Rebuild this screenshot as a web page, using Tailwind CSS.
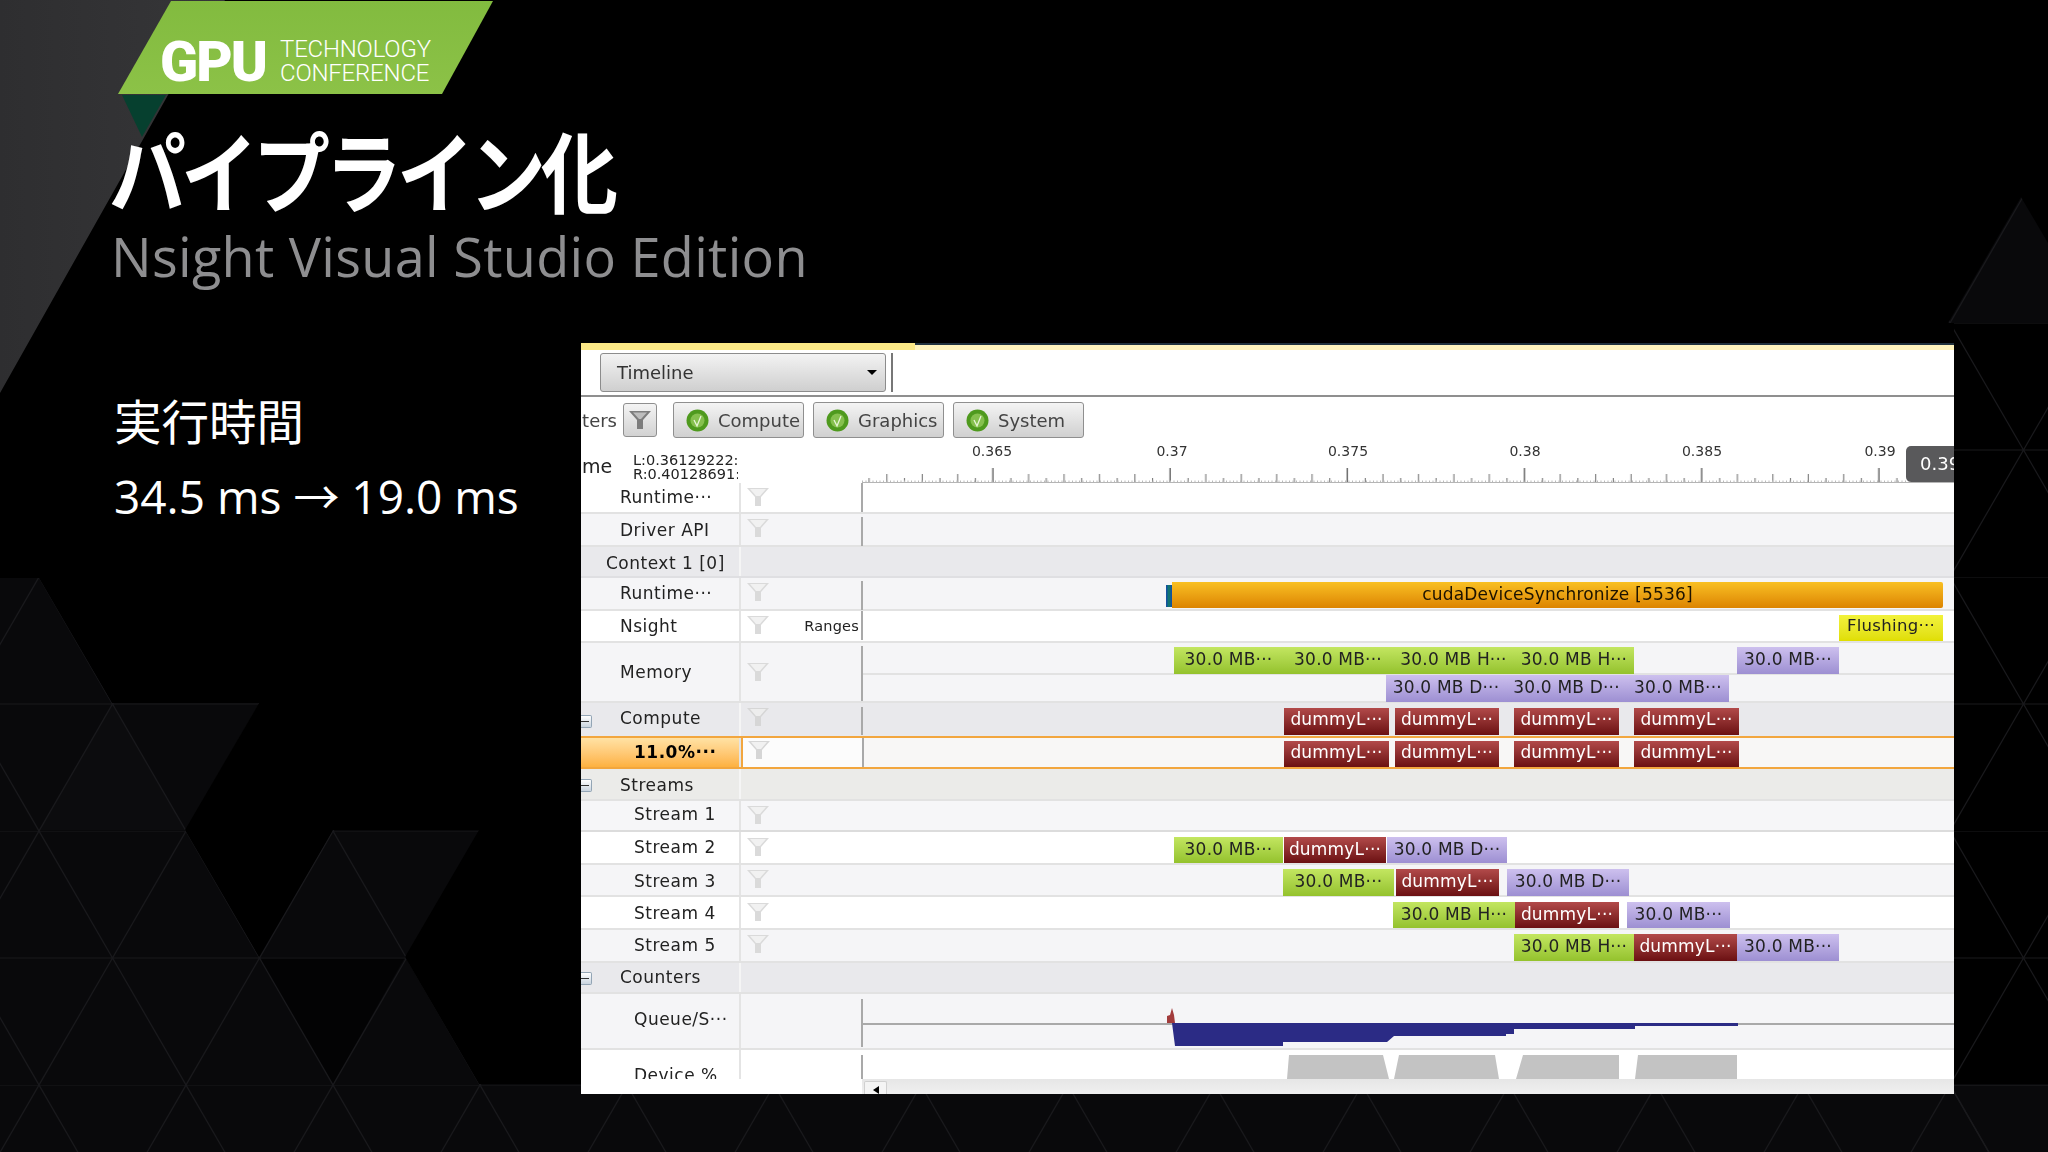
<!DOCTYPE html>
<html lang="ja">
<head>
    <meta charset="UTF-8">
    <title>パイプライン化</title>
    <script src="https://cdn.jsdelivr.net/npm/@tailwindcss/browser@4"></script>
</head>
<body class="bg-black">
<div class="relative w-[2048px] h-[1152px] overflow-hidden bg-black font-['Open_Sans',sans-serif]">

    <!-- slide background -->
    <svg class="absolute inset-0" width="2048" height="1152" viewBox="0 0 2048 1152">
        <defs>
            <pattern id="tri" x="39" y="577" width="147" height="254" patternUnits="userSpaceOnUse">
                <path d="M0 0H147M0 127H147M0 0L73.5 127L147 254M147 0L73.5 127L0 254" fill="none" stroke="#19191c" stroke-width="1.2"/>
            </pattern>
            <linearGradient id="corner" x1="0" y1="0" x2="1" y2="0">
                <stop offset="0" stop-color="#2e2e30"/>
                <stop offset="1" stop-color="#363638"/>
            </linearGradient>
        </defs>
        <polygon points="0,0 225,0 168,95 0,393" fill="url(#corner)"/>
        <polygon points="0,578 39,578 112,703 259,703 185,830 259,957 333,830 479,830 405,957 479,1084 2048,1084 2048,1152 0,1152" fill="#09090b"/>
        <polygon points="259,957 405,957 333,1084" fill="#030304"/>
        <polygon points="39,830 185,830 112,703" fill="#0c0c0e"/>
        <polygon points="0,578 39,578 112,703 259,703 185,830 259,957 333,830 479,830 405,957 479,1084 2048,1084 2048,1152 0,1152" fill="url(#tri)"/>
        <polygon points="1954,323 2048,323 2048,1152 1954,1152" fill="url(#tri)"/>
        <polygon points="2021,197 2048,243 2048,323 1948,323" fill="#09090b"/>
        <polygon points="2021,197 2048,243 2048,323 1948,323" fill="url(#tri)"/>
        <polygon points="122,95 166,95 142,137" fill="#06402f"/>
    </svg>

    <div class="relative">
        <!-- header -->
        <div class="h-[343px] pl-[111px] pt-px">
            <div class="relative w-[376px] h-[93px] ml-[7px] bg-gradient-to-b from-[#82bb3f] to-[#8cc247] [clip-path:polygon(53px_0,375px_0,324px_93px,0_93px)]">
                <span class="absolute left-[42px] top-[33px] text-[56px] leading-[56px] font-black tracking-[-2px] text-white font-['Roboto',sans-serif]">GPU</span>
                <span class="absolute left-[162px] top-[36px] text-[24px] leading-[24px] font-light tracking-[-0.2px] text-white font-['Roboto',sans-serif]">TECHNOLOGY</span>
                <span class="absolute left-[162px] top-[60px] text-[24px] leading-[24px] font-light tracking-[-0.2px] text-white font-['Roboto',sans-serif]">CONFERENCE</span>
            </div>
            <h1 class="mt-[24px] h-[100px] -ml-[2px] scale-y-[1.14] text-[77px] tracking-[-5px] leading-[100px] font-bold text-white font-['Noto_Sans_CJK_JP',sans-serif]">パイプライン化</h1>
            <p class="mt-[5px] text-[54px] tracking-[0.3px] leading-[66px] text-[#8e8e90]">Nsight Visual Studio Edition</p>
        </div>

        <div class="flex">
            <!-- left text -->
            <div class="w-[581px] shrink-0 pl-[114px] pt-[44px] text-white">
                <p class="text-[47.5px] leading-[66px] font-['Noto_Sans_CJK_JP',sans-serif]">実行時間</p>
                <p class="mt-[13px] text-[46px] leading-[60px] font-['Open_Sans','Noto_Sans_CJK_JP',sans-serif] whitespace-nowrap">34.5 ms → 19.0 ms</p>
            </div>

            <!-- profiler panel -->
            <div class="relative w-[1373px] h-[751px] shrink-0 bg-white overflow-hidden font-['DejaVu_Sans',sans-serif] text-[17px] tracking-[0.5px] text-[#222] blur-[0.4px]">
                <div class="flex h-[7px]">
                    <div class="w-[334px] bg-[#fbe886]"></div>
                    <div class="flex-1 flex flex-col">
                        <div class="h-[2px] bg-[#21323f]"></div>
                        <div class="flex-1 bg-[#fff3bd]"></div>
                    </div>
                </div>

                <!-- toolbar -->
                <div class="flex items-center h-[47px] pl-[19px] border-b-2 border-[#8f8f8f]">
                    <div class="w-[286px] h-[39px] rounded-[3px] border border-[#8c8c8c] bg-gradient-to-b from-[#f3f3f3] to-[#cfcfcf] flex items-center justify-between pl-[16px] pr-[8px] text-[#333] text-[18px] tracking-normal">
                        <span>Timeline</span>
                        <span class="w-0 h-0 border-x-[5px] border-x-transparent border-t-[5px] border-t-black"></span>
                    </div>
                    <div class="ml-[5px] w-[2px] h-[39px] bg-[#777]"></div>
                </div>

                <!-- filter buttons -->
                <div class="flex items-center h-[46px] text-[#444] text-[18px] tracking-normal">
                    <div class="w-[42px] pr-[6px] flex justify-end overflow-hidden whitespace-nowrap">ters</div>
                    <div class="w-[34px] h-[34px] rounded-[3px] border border-[#8f8f8f] bg-gradient-to-b from-[#f4f4f4] to-[#d2d2d2] flex items-center justify-center">
                        <svg width="22" height="18" viewBox="0 0 22 18"><path d="M0 0H22L14 9V18H8V9Z" fill="#7d7d7d"/><path d="M4 1.5H18L12 8H10Z" fill="#bdbdbd"/></svg>
                    </div>
                    <div class="ml-[16px] w-[131px] h-[36px] rounded-[3px] border border-[#8f8f8f] bg-gradient-to-b from-[#f4f4f4] to-[#d0d0d0] flex items-center pl-[12px] gap-[9px]">
                        <svg width="23" height="23" viewBox="0 0 23 23"><circle cx="11.5" cy="11.5" r="11" fill="#4f9a1e"/><circle cx="11.5" cy="11.5" r="7" fill="#86c04e"/><path d="M8 11L11 17L15 7" fill="none" stroke="#e8f5d8" stroke-width="1.3"/></svg>
                        <span>Compute</span>
                    </div>
                    <div class="ml-[9px] w-[131px] h-[36px] rounded-[3px] border border-[#8f8f8f] bg-gradient-to-b from-[#f4f4f4] to-[#d0d0d0] flex items-center pl-[12px] gap-[9px]">
                        <svg width="23" height="23" viewBox="0 0 23 23"><circle cx="11.5" cy="11.5" r="11" fill="#4f9a1e"/><circle cx="11.5" cy="11.5" r="7" fill="#86c04e"/><path d="M8 11L11 17L15 7" fill="none" stroke="#e8f5d8" stroke-width="1.3"/></svg>
                        <span>Graphics</span>
                    </div>
                    <div class="ml-[9px] w-[131px] h-[36px] rounded-[3px] border border-[#8f8f8f] bg-gradient-to-b from-[#f4f4f4] to-[#d0d0d0] flex items-center pl-[12px] gap-[9px]">
                        <svg width="23" height="23" viewBox="0 0 23 23"><circle cx="11.5" cy="11.5" r="11" fill="#4f9a1e"/><circle cx="11.5" cy="11.5" r="7" fill="#86c04e"/><path d="M8 11L11 17L15 7" fill="none" stroke="#e8f5d8" stroke-width="1.3"/></svg>
                        <span>System</span>
                    </div>
                </div>

                <!-- ruler -->
                <div class="relative h-[40px] tracking-normal">
                    <span class="absolute left-[1px] top-[13px] text-[19px] leading-[20px]">me</span>
                    <div class="absolute left-[52px] top-[10px] w-[105px] overflow-hidden text-[14.5px] leading-[14px] whitespace-nowrap">L:0.36129222:<br>R:0.40128691:</div>
                    <span class="absolute left-[411px] top-0 -translate-x-1/2 text-[14px] leading-[16px] text-[#333]">0.365</span>
                    <span class="absolute left-[591px] top-0 -translate-x-1/2 text-[14px] leading-[16px] text-[#333]">0.37</span>
                    <span class="absolute left-[767px] top-0 -translate-x-1/2 text-[14px] leading-[16px] text-[#333]">0.375</span>
                    <span class="absolute left-[944px] top-0 -translate-x-1/2 text-[14px] leading-[16px] text-[#333]">0.38</span>
                    <span class="absolute left-[1121px] top-0 -translate-x-1/2 text-[14px] leading-[16px] text-[#333]">0.385</span>
                    <span class="absolute left-[1299px] top-0 -translate-x-1/2 text-[14px] leading-[16px] text-[#333]">0.39</span>
                    <svg class="absolute left-[281px] top-0" width="1092" height="40" viewBox="0 0 1092 40">
                        <defs>
                            <pattern id="ticks" x="-46.5" y="0" width="177.2" height="40" patternUnits="userSpaceOnUse">
                                <path d="M177.2 25V40M0.5 25V40M35.9 31V40M71.4 31V40M106.8 31V40M142.2 31V40M18.2 35V40M53.6 35V40M89 35V40M124.5 35V40M159.9 35V40" stroke="#6b6b6b" stroke-width="1"/>
                            </pattern>
                        </defs>
                        <rect width="1092" height="40" fill="url(#ticks)"/>
                        <path d="M0 38.5H1092" stroke="#bbb" stroke-width="2" stroke-dasharray="1 2.5"/>
                        <path d="M0 39.5H1092" stroke="#b5b5b5"/>
                    </svg>
                    <div class="absolute left-[1325px] top-[3px] w-[60px] h-[36px] rounded-l-[5px] bg-[#59595b] text-white text-[18px] leading-[35px] pl-[14px]">0.39</div>
                </div>

                <!-- track rows -->
                <div class="flex flex-col">
                    <div class="flex h-[31px] bg-white border-b-2 border-[#e2e2e2]">
                        <div class="w-[158px] pl-[39px] leading-[29px] whitespace-nowrap">Runtime···</div>
                        <div class="w-[2px] bg-[#e4e4e4]"></div>
                        <div class="w-[120px] pl-[6px] pt-[5px]"><svg width="22" height="18" viewBox="0 0 22 18"><path d="M0 0H22L14 9V18H8V9Z" fill="#dadada"/><path d="M3 1H19L13 8H9Z" fill="#f1f1f1"/></svg></div>
                        <div class="w-[2px] h-[29px] bg-[#a9a9a9]"></div>
                        <div class="relative flex-1"></div>
                    </div>
                    <div class="flex h-[33px] bg-[#f5f5f7] border-b-2 border-[#e2e2e2]">
                        <div class="w-[158px] pl-[39px] leading-[32px] whitespace-nowrap">Driver API</div>
                        <div class="w-[2px] bg-[#e4e4e4]"></div>
                        <div class="w-[120px] pl-[6px] pt-[5px]"><svg width="22" height="18" viewBox="0 0 22 18"><path d="M0 0H22L14 9V18H8V9Z" fill="#dadada"/><path d="M3 1H19L13 8H9Z" fill="#f1f1f1"/></svg></div>
                        <div class="w-[2px] h-[29px] mt-[3px] bg-[#a9a9a9]"></div>
                        <div class="relative flex-1"></div>
                    </div>
                    <div class="flex h-[31px] bg-[#e9e9ec] border-b-2 border-[#dfdfe2]">
                        <div class="w-[158px] pl-[25px] leading-[32px] whitespace-nowrap">Context 1 [0]</div>
                        <div class="w-[2px] bg-[#f5f5f5]"></div>
                    </div>
                    <div class="flex h-[33px] bg-[#f5f5f7] border-b-2 border-[#e2e2e2]">
                        <div class="w-[158px] pl-[39px] leading-[31px] whitespace-nowrap">Runtime···</div>
                        <div class="w-[2px] bg-[#e4e4e4]"></div>
                        <div class="w-[120px] pl-[6px] pt-[5px]"><svg width="22" height="18" viewBox="0 0 22 18"><path d="M0 0H22L14 9V18H8V9Z" fill="#dadada"/><path d="M3 1H19L13 8H9Z" fill="#f1f1f1"/></svg></div>
                        <div class="w-[2px] h-[29px] mt-[3px] bg-[#a9a9a9]"></div>
                        <div class="relative flex-1">
                            <div class="absolute left-[303px] top-[7px] w-[6px] h-[22px] bg-gradient-to-r from-[#1b44a8] via-[#177a66] to-[#1b44a8]"></div>
                            <div class="absolute left-[309px] top-[4px] w-[771px] h-[26px] rounded-r-[2px] bg-gradient-to-b from-[#f9c022] to-[#dc8400] text-center leading-[24px] tracking-[0.2px] text-[#1d1300]">cudaDeviceSynchronize [5536]</div>
                        </div>
                    </div>
                    <div class="flex h-[32px] bg-white border-b-2 border-[#e2e2e2]">
                        <div class="w-[158px] pl-[39px] leading-[30px] whitespace-nowrap">Nsight</div>
                        <div class="w-[2px] bg-[#e4e4e4]"></div>
                        <div class="relative w-[120px] pl-[6px] pt-[5px]"><svg width="22" height="18" viewBox="0 0 22 18"><path d="M0 0H22L14 9V18H8V9Z" fill="#dadada"/><path d="M3 1H19L13 8H9Z" fill="#f1f1f1"/></svg><span class="absolute right-[2px] top-[5px] text-[14.5px] tracking-[0.2px] leading-[20px]">Ranges</span></div>
                        <div class="w-[2px] h-[29px] bg-[#a9a9a9]"></div>
                        <div class="relative flex-1">
                            <div class="absolute left-[976px] top-[4px] w-[104px] h-[26px] bg-gradient-to-b from-[#f2f23a] to-[#e0de00] text-center text-[16.5px] tracking-[0.3px] leading-[21px]">Flushing···</div>
                        </div>
                    </div>
                    <div class="flex h-[60px] bg-[#f5f5f7] border-b-2 border-[#e2e2e2]">
                        <div class="w-[158px] pl-[39px] leading-[59px] whitespace-nowrap">Memory</div>
                        <div class="w-[2px] bg-[#e4e4e4]"></div>
                        <div class="w-[120px] pl-[6px] pt-[20px]"><svg width="22" height="18" viewBox="0 0 22 18"><path d="M0 0H22L14 9V18H8V9Z" fill="#dadada"/><path d="M3 1H19L13 8H9Z" fill="#f1f1f1"/></svg></div>
                        <div class="w-[2px] h-[55px] mt-[3px] bg-[#a9a9a9]"></div>
                        <div class="relative flex-1">
                            <div class="absolute left-0 right-0 top-[30px] h-[2px] bg-[#e2e2e2]"></div>
                            <div class="absolute left-[311px] top-[4px] w-[109px] h-[27px] bg-gradient-to-b from-[#c3e660] to-[#94c22c] text-center leading-[24px] tracking-[0.2px]">30.0 MB···</div>
                            <div class="absolute left-[420px] top-[4px] w-[110px] h-[27px] bg-gradient-to-b from-[#c3e660] to-[#94c22c] text-center leading-[24px] tracking-[0.2px]">30.0 MB···</div>
                            <div class="absolute left-[530px] top-[4px] w-[121px] h-[27px] bg-gradient-to-b from-[#c3e660] to-[#94c22c] text-center leading-[24px] tracking-[0.2px]">30.0 MB H···</div>
                            <div class="absolute left-[651px] top-[4px] w-[120px] h-[27px] bg-gradient-to-b from-[#c3e660] to-[#94c22c] text-center leading-[24px] tracking-[0.2px]">30.0 MB H···</div>
                            <div class="absolute left-[874px] top-[4px] w-[102px] h-[27px] bg-gradient-to-b from-[#cdc0ee] to-[#9d8fd2] text-center leading-[24px] tracking-[0.2px]">30.0 MB···</div>
                            <div class="absolute left-[523px] top-[32px] w-[120px] h-[27px] bg-gradient-to-b from-[#cdc0ee] to-[#9d8fd2] text-center leading-[25px] tracking-[0.2px]">30.0 MB D···</div>
                            <div class="absolute left-[643px] top-[32px] w-[121px] h-[27px] bg-gradient-to-b from-[#cdc0ee] to-[#9d8fd2] text-center leading-[25px] tracking-[0.2px]">30.0 MB D···</div>
                            <div class="absolute left-[764px] top-[32px] w-[102px] h-[27px] bg-gradient-to-b from-[#cdc0ee] to-[#9d8fd2] text-center leading-[25px] tracking-[0.2px]">30.0 MB···</div>
                        </div>
                    </div>
                    <div class="flex h-[35px] bg-[#e9e9ec] border-b-2 border-[#f2a63e]">
                        <div class="relative w-[158px] pl-[39px] leading-[31px] whitespace-nowrap">
                            <span class="absolute left-0 top-[12px] w-[11px] h-[13px] bg-gradient-to-b from-[#fff] to-[#c9d4df] border border-l-0 border-[#93a5b5] rounded-r-[2px]"><span class="block mt-[5px] w-[8px] h-px bg-[#333]"></span></span>
                            Compute
                        </div>
                        <div class="w-[2px] bg-[#f5f5f5]"></div>
                        <div class="w-[120px] pl-[6px] pt-[5px]"><svg width="22" height="18" viewBox="0 0 22 18"><path d="M0 0H22L14 9V18H8V9Z" fill="#d6d6d6"/><path d="M3 1H19L13 8H9Z" fill="#ededed"/></svg></div>
                        <div class="w-[2px] h-[28px] mt-[4px] bg-[#a9a9a9]"></div>
                        <div class="relative flex-1">
                            <div class="absolute left-[421px] top-[5px] w-[105px] h-[27px] bg-gradient-to-b from-[#b24a4a] to-[#6b0f12] text-center text-white leading-[23px] tracking-[0.2px]">dummyL···</div>
                            <div class="absolute left-[532px] top-[5px] w-[104px] h-[27px] bg-gradient-to-b from-[#b24a4a] to-[#6b0f12] text-center text-white leading-[23px] tracking-[0.2px]">dummyL···</div>
                            <div class="absolute left-[651px] top-[5px] w-[105px] h-[27px] bg-gradient-to-b from-[#b24a4a] to-[#6b0f12] text-center text-white leading-[23px] tracking-[0.2px]">dummyL···</div>
                            <div class="absolute left-[771px] top-[5px] w-[105px] h-[27px] bg-gradient-to-b from-[#b24a4a] to-[#6b0f12] text-center text-white leading-[23px] tracking-[0.2px]">dummyL···</div>
                        </div>
                    </div>
                    <div class="flex h-[31px] border-b-2 border-[#f2a63e]">
                        <div class="w-[158px] pl-[53px] leading-[28px] whitespace-nowrap font-bold text-black bg-gradient-to-b from-[#ffe2a4] to-[#fdb13f]">11.0%···</div>
                        <div class="w-[2px] bg-[#e4e4e4]"></div>
                        <div class="w-[121px] pl-[5px] pt-[3px] bg-[#fcfcfc] border-l-2 border-[#f2a63e]"><svg width="22" height="18" viewBox="0 0 22 18"><path d="M0 0H22L14 9V18H8V9Z" fill="#d6d6d6"/><path d="M3 1H19L13 8H9Z" fill="#f1f1f1"/></svg></div>
                        <div class="w-[2px] bg-[#a9a9a9]"></div>
                        <div class="relative flex-1 bg-[#f8f7f6]">
                            <div class="absolute left-[420px] top-[3px] w-[105px] h-[26px] bg-gradient-to-b from-[#b24a4a] to-[#6b0f12] text-center text-white leading-[23px] tracking-[0.2px]">dummyL···</div>
                            <div class="absolute left-[531px] top-[3px] w-[104px] h-[26px] bg-gradient-to-b from-[#b24a4a] to-[#6b0f12] text-center text-white leading-[23px] tracking-[0.2px]">dummyL···</div>
                            <div class="absolute left-[650px] top-[3px] w-[105px] h-[26px] bg-gradient-to-b from-[#b24a4a] to-[#6b0f12] text-center text-white leading-[23px] tracking-[0.2px]">dummyL···</div>
                            <div class="absolute left-[770px] top-[3px] w-[105px] h-[26px] bg-gradient-to-b from-[#b24a4a] to-[#6b0f12] text-center text-white leading-[23px] tracking-[0.2px]">dummyL···</div>
                        </div>
                    </div>
                    <div class="flex h-[32px] bg-[#ebebe9] border-b-2 border-[#e2e2e2]">
                        <div class="relative w-[158px] pl-[39px] leading-[32px] whitespace-nowrap">
                            <span class="absolute left-0 top-[10px] w-[11px] h-[13px] bg-gradient-to-b from-[#fff] to-[#c9d4df] border border-l-0 border-[#93a5b5] rounded-r-[2px]"><span class="block mt-[5px] w-[8px] h-px bg-[#333]"></span></span>
                            Streams
                        </div>
                        <div class="w-[2px] bg-[#f5f5f5]"></div>
                    </div>
                    <div class="flex h-[31px] bg-[#f6f6f8] border-b-2 border-[#dcdcdc]">
                        <div class="w-[158px] pl-[53px] leading-[27px] whitespace-nowrap">Stream 1</div>
                        <div class="w-[2px] bg-[#e4e4e4]"></div>
                        <div class="w-[120px] pl-[6px] pt-[5px]"><svg width="22" height="18" viewBox="0 0 22 18"><path d="M0 0H22L14 9V18H8V9Z" fill="#dadada"/><path d="M3 1H19L13 8H9Z" fill="#f1f1f1"/></svg></div>
                    </div>
                    <div class="flex h-[33px] bg-white border-b-2 border-[#e2e2e2]">
                        <div class="w-[158px] pl-[53px] leading-[31px] whitespace-nowrap">Stream 2</div>
                        <div class="w-[2px] bg-[#e4e4e4]"></div>
                        <div class="w-[120px] pl-[6px] pt-[6px]"><svg width="22" height="18" viewBox="0 0 22 18"><path d="M0 0H22L14 9V18H8V9Z" fill="#dadada"/><path d="M3 1H19L13 8H9Z" fill="#f1f1f1"/></svg></div>
                        <div class="w-[2px]"></div>
                        <div class="relative flex-1">
                            <div class="absolute left-[311px] top-[5px] w-[109px] h-[26px] bg-gradient-to-b from-[#c3e660] to-[#94c22c] text-center leading-[24px] tracking-[0.2px]">30.0 MB···</div>
                            <div class="absolute left-[421px] top-[5px] w-[102px] h-[26px] bg-gradient-to-b from-[#b24a4a] to-[#6b0f12] text-center text-white leading-[24px] tracking-[0.2px]">dummyL···</div>
                            <div class="absolute left-[524px] top-[5px] w-[120px] h-[26px] bg-gradient-to-b from-[#cdc0ee] to-[#9d8fd2] text-center leading-[24px] tracking-[0.2px]">30.0 MB D···</div>
                        </div>
                    </div>
                    <div class="flex h-[32px] bg-[#f5f5f7] border-b-2 border-[#e2e2e2]">
                        <div class="w-[158px] pl-[53px] leading-[32px] whitespace-nowrap">Stream 3</div>
                        <div class="w-[2px] bg-[#e4e4e4]"></div>
                        <div class="w-[120px] pl-[6px] pt-[5px]"><svg width="22" height="18" viewBox="0 0 22 18"><path d="M0 0H22L14 9V18H8V9Z" fill="#dadada"/><path d="M3 1H19L13 8H9Z" fill="#f1f1f1"/></svg></div>
                        <div class="w-[2px]"></div>
                        <div class="relative flex-1">
                            <div class="absolute left-[420px] top-[4px] w-[111px] h-[27px] bg-gradient-to-b from-[#c3e660] to-[#94c22c] text-center leading-[24px] tracking-[0.2px]">30.0 MB···</div>
                            <div class="absolute left-[533px] top-[4px] w-[103px] h-[27px] bg-gradient-to-b from-[#b24a4a] to-[#6b0f12] text-center text-white leading-[24px] tracking-[0.2px]">dummyL···</div>
                            <div class="absolute left-[644px] top-[4px] w-[122px] h-[27px] bg-gradient-to-b from-[#cdc0ee] to-[#9d8fd2] text-center leading-[24px] tracking-[0.2px]">30.0 MB D···</div>
                        </div>
                    </div>
                    <div class="flex h-[33px] bg-white border-b-2 border-[#e2e2e2]">
                        <div class="w-[158px] pl-[53px] leading-[33px] whitespace-nowrap">Stream 4</div>
                        <div class="w-[2px] bg-[#e4e4e4]"></div>
                        <div class="w-[120px] pl-[6px] pt-[6px]"><svg width="22" height="18" viewBox="0 0 22 18"><path d="M0 0H22L14 9V18H8V9Z" fill="#dadada"/><path d="M3 1H19L13 8H9Z" fill="#f1f1f1"/></svg></div>
                        <div class="w-[2px]"></div>
                        <div class="relative flex-1">
                            <div class="absolute left-[530px] top-[5px] w-[122px] h-[26px] bg-gradient-to-b from-[#c3e660] to-[#94c22c] text-center leading-[24px] tracking-[0.2px]">30.0 MB H···</div>
                            <div class="absolute left-[652px] top-[5px] w-[104px] h-[26px] bg-gradient-to-b from-[#b24a4a] to-[#6b0f12] text-center text-white leading-[24px] tracking-[0.2px]">dummyL···</div>
                            <div class="absolute left-[764px] top-[5px] w-[103px] h-[26px] bg-gradient-to-b from-[#cdc0ee] to-[#9d8fd2] text-center leading-[24px] tracking-[0.2px]">30.0 MB···</div>
                        </div>
                    </div>
                    <div class="flex h-[33px] bg-[#f5f5f7] border-b-2 border-[#e2e2e2]">
                        <div class="w-[158px] pl-[53px] leading-[31px] whitespace-nowrap">Stream 5</div>
                        <div class="w-[2px] bg-[#e4e4e4]"></div>
                        <div class="w-[120px] pl-[6px] pt-[5px]"><svg width="22" height="18" viewBox="0 0 22 18"><path d="M0 0H22L14 9V18H8V9Z" fill="#dadada"/><path d="M3 1H19L13 8H9Z" fill="#f1f1f1"/></svg></div>
                        <div class="w-[2px]"></div>
                        <div class="relative flex-1">
                            <div class="absolute left-[651px] top-[4px] w-[120px] h-[27px] bg-gradient-to-b from-[#c3e660] to-[#94c22c] text-center leading-[24px] tracking-[0.2px]">30.0 MB H···</div>
                            <div class="absolute left-[771px] top-[4px] w-[103px] h-[27px] bg-gradient-to-b from-[#b24a4a] to-[#6b0f12] text-center text-white leading-[24px] tracking-[0.2px]">dummyL···</div>
                            <div class="absolute left-[874px] top-[4px] w-[102px] h-[27px] bg-gradient-to-b from-[#cdc0ee] to-[#9d8fd2] text-center leading-[24px] tracking-[0.2px]">30.0 MB···</div>
                        </div>
                    </div>
                    <div class="flex h-[31px] bg-[#e9e9ec] border-b-2 border-[#e2e2e2]">
                        <div class="relative w-[158px] pl-[39px] leading-[29px] whitespace-nowrap">
                            <span class="absolute left-0 top-[9px] w-[11px] h-[13px] bg-gradient-to-b from-[#fff] to-[#c9d4df] border border-l-0 border-[#93a5b5] rounded-r-[2px]"><span class="block mt-[5px] w-[8px] h-px bg-[#333]"></span></span>
                            Counters
                        </div>
                        <div class="w-[2px] bg-[#f5f5f5]"></div>
                    </div>
                    <div class="flex h-[56px] bg-[#f5f5f7] border-b-2 border-[#e2e2e2]">
                        <div class="w-[158px] pl-[53px] leading-[51px] whitespace-nowrap">Queue/S···</div>
                        <div class="w-[2px] bg-[#e4e4e4]"></div>
                        <div class="w-[120px]"></div>
                        <div class="w-[2px] h-[48px] mt-[5px] bg-[#a9a9a9]"></div>
                        <div class="relative flex-1">
                            <svg class="absolute left-0 top-0" width="1091" height="54" viewBox="0 0 1091 54">
                                <path d="M0 30H1091" stroke="#a9a9a9" stroke-width="2"/>
                                <path d="M309 29L312 52H420V48H524L531 42H643V40H651V35H772V32H875V29Z" fill="#2b2b85"/>
                                <path d="M304 29V22L307 21L309 14L311 21L312 29Z" fill="#a23c3c"/>
                            </svg>
                        </div>
                    </div>
                    <div class="flex h-[29px] bg-white overflow-hidden">
                        <div class="w-[158px] pl-[53px] leading-[50px] whitespace-nowrap">Device %</div>
                        <div class="w-[2px] bg-[#e4e4e4]"></div>
                        <div class="w-[120px]"></div>
                        <div class="w-[2px] h-[24px] mt-[5px] bg-[#a9a9a9]"></div>
                        <div class="relative flex-1">
                            <svg class="absolute left-0 top-0" width="1091" height="29" viewBox="0 0 1091 29">
                                <path d="M426 5H520L526 29H424Z M536 5H632L636 29H531Z M660 5H756V29H653Z M775 5H874V29H772Z" fill="#c3c3c3"/>
                            </svg>
                        </div>
                    </div>
                    <!-- scrollbar -->
                    <div class="relative h-[15px] ml-[281px] bg-gradient-to-b from-[#e6e6e6] to-[#f0f0f0]">
                        <div class="absolute left-[2px] top-[2px] w-[23px] h-[13px] bg-[#f4f4f4] border-x border-t border-[#d0d0d0] rounded-t-[2px] flex items-end justify-center">
                            <span class="w-0 h-0 border-y-[4px] border-y-transparent border-r-[6px] border-r-black"></span>
                        </div>
                    </div>
                </div>
            </div>
        </div>
    </div>
</div>
</body>
</html>
